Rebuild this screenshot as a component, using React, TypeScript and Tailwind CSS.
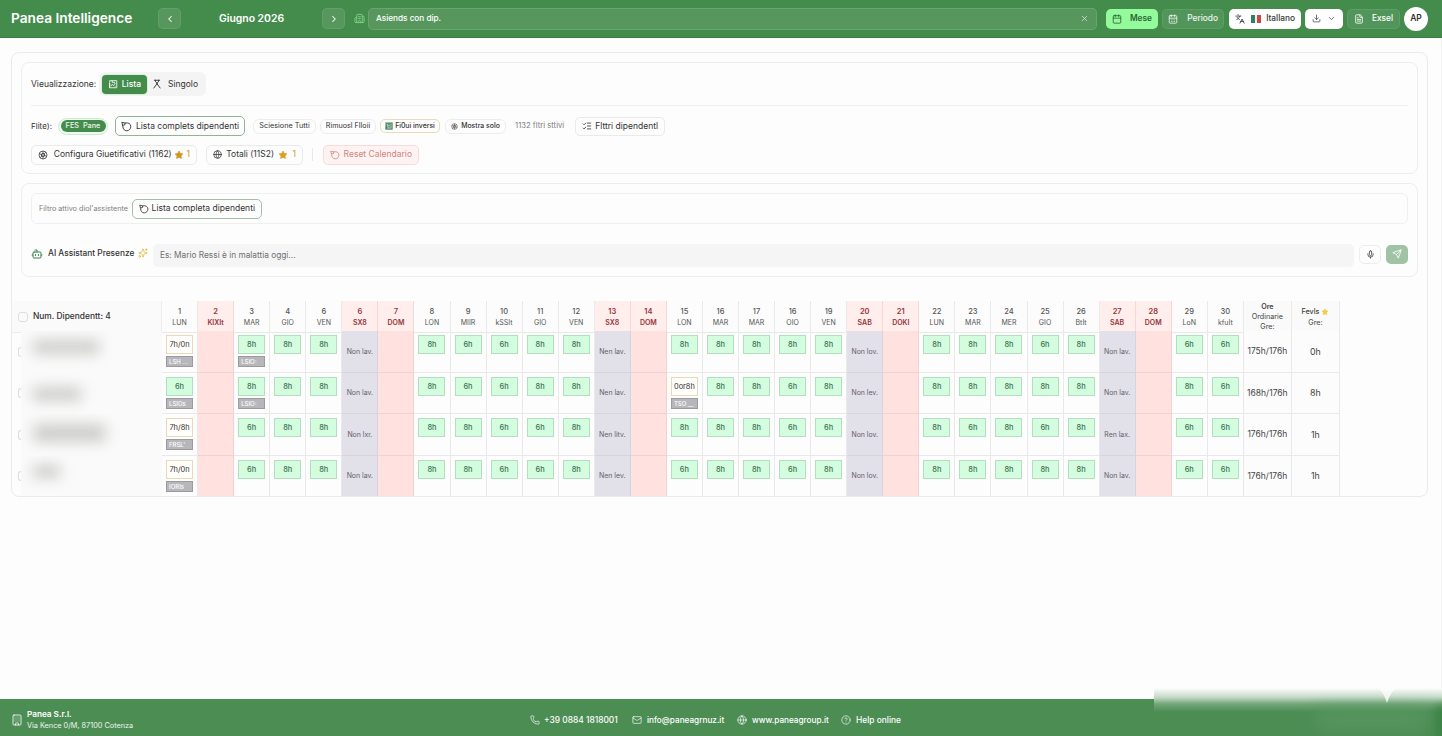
import {
  Bot,
  Building,
  Building2,
  Calendar,
  CalendarDays,
  ChevronDown,
  ChevronLeft,
  ChevronRight,
  CircleHelp,
  Download,
  FileText,
  Globe,
  Languages,
  ListChecks,
  Mail,
  Mic,
  Phone,
  Send,
  Sparkles,
  X,
} from "lucide-react";

interface Giorno {
  num: string;
  nome: string;
  tipo?: "sab" | "dom";
}

interface Riga {
  ore: string[];
  note: Record<number, string>;
  totale: string;
  ferie: string;
  nonLav: string[];
  sfocato: string;
}

const giorni: Giorno[] = [
  { num: "1", nome: "LUN" },
  { num: "2", nome: "KIXIt", tipo: "dom" },
  { num: "3", nome: "MAR" },
  { num: "4", nome: "GIO" },
  { num: "6", nome: "VEN" },
  { num: "6", nome: "SX8", tipo: "sab" },
  { num: "7", nome: "DOM", tipo: "dom" },
  { num: "8", nome: "LON" },
  { num: "9", nome: "MIIR" },
  { num: "10", nome: "kSSIt" },
  { num: "11", nome: "GIO" },
  { num: "12", nome: "VEN" },
  { num: "13", nome: "SX8", tipo: "sab" },
  { num: "14", nome: "DOM", tipo: "dom" },
  { num: "15", nome: "LON" },
  { num: "16", nome: "MAR" },
  { num: "17", nome: "MAR" },
  { num: "16", nome: "OIO" },
  { num: "19", nome: "VEN" },
  { num: "20", nome: "SAB", tipo: "sab" },
  { num: "21", nome: "DOKI", tipo: "dom" },
  { num: "22", nome: "LUN" },
  { num: "23", nome: "MAR" },
  { num: "24", nome: "MER" },
  { num: "25", nome: "GIO" },
  { num: "26", nome: "BtIt" },
  { num: "27", nome: "SAB", tipo: "sab" },
  { num: "28", nome: "DOM", tipo: "dom" },
  { num: "29", nome: "LoN" },
  { num: "30", nome: "kfuIt" },
];

const righe: Riga[] = [
  {
    ore: ["7h/0n", "", "8h", "8h", "8h", "", "", "8h", "6h", "6h", "8h", "8h", "", "", "8h", "8h", "8h", "8h", "8h", "", "", "8h", "8h", "8h", "6h", "8h", "", "", "6h", "6h"],
    note: { 0: "LSH ...", 2: "LSIO:" },
    totale: "175h/176h",
    ferie: "0h",
    nonLav: ["Non lav.", "Nen lav.", "Non lov.", "Non lav."],
    sfocato: "w-[68px] h-[14px] mt-[9px] ml-[11px]",
  },
  {
    ore: ["6h", "", "8h", "8h", "8h", "", "", "8h", "6h", "6h", "8h", "8h", "", "", "0or8h", "8h", "8h", "6h", "8h", "", "", "8h", "8h", "8h", "8h", "8h", "", "", "8h", "6h"],
    note: { 0: "LSIOs", 2: "LSIO:", 14: "TSO __" },
    totale: "168h/176h",
    ferie: "8h",
    nonLav: ["Non lav.", "Nen lav.", "Non lev.", "Non lav."],
    sfocato: "w-[50px] h-[14px] mt-[14px] ml-[11px]",
  },
  {
    ore: ["7h/8h", "", "6h", "8h", "8h", "", "", "8h", "8h", "6h", "6h", "8h", "", "", "8h", "8h", "8h", "6h", "6h", "", "", "8h", "6h", "8h", "6h", "8h", "", "", "6h", "6h"],
    note: { 0: "FRSL'" },
    totale: "176h/176h",
    ferie: "1h",
    nonLav: ["Non lxr.", "Nen litv.", "Non lov.", "Ren lax."],
    sfocato: "w-[73px] h-[18px] mt-[10px] ml-[12px]",
  },
  {
    ore: ["7h/0n", "", "6h", "8h", "8h", "", "", "8h", "8h", "6h", "6h", "8h", "", "", "6h", "8h", "8h", "6h", "8h", "", "", "8h", "8h", "8h", "8h", "8h", "", "", "6h", "6h"],
    note: { 0: "IORIs" },
    totale: "176h/176h",
    ferie: "1h",
    nonLav: ["Non lav.", "Nen lev.", "Non lov.", "Non lav."],
    sfocato: "w-[29px] h-[13px] mt-[9px] ml-[11px]",
  },
];

const sabati = [5, 12, 19, 26];

function IconaLista({ className }: { className?: string }) {
  return (
    <svg viewBox="0 0 12 12" className={className} fill="none" stroke="currentColor" strokeWidth="1">
      <path d="M2 4V2h8.500v8.500H2z" strokeLinejoin="round" />
      <path d="M2 10.500V5M3.500 8.500l1.500-2 1.800 1.300 2-3M5 2v2h3.500M8 8.800h1" />
    </svg>
  );
}

function IconaSingolo({ className }: { className?: string }) {
  return (
    <svg viewBox="0 0 12 12" className={className} fill="none" stroke="currentColor" strokeWidth="1.100" strokeLinecap="round" strokeLinejoin="round">
      <path d="M2.800 1.500h6.400M4 1.500c0 2 .8 3 2 3s2-1 2-3M6 4.500v1.200M6 5.700L2.200 10.800M6 5.700l3.800 5.100" />
    </svg>
  );
}

function IconaTag({ className }: { className?: string }) {
  return (
    <svg viewBox="0 0 12 12" className={className} fill="none" stroke="currentColor" strokeWidth="1" strokeLinejoin="round" strokeLinecap="round">
      <path d="M1.300 1.500l3.200.8c3.200-.9 6.200.7 6.200 3.700 0 2.500-2 4.700-4.400 4.700-2.600 0-4.400-2.100-4.300-4.700z" />
      <path d="M4.500 2.300L4.200 4.200 2 4.700" />
    </svg>
  );
}

function IconaApertura({ className }: { className?: string }) {
  return (
    <svg viewBox="0 0 12 12" className={className} fill="none" stroke="currentColor" strokeWidth=".9">
      <circle cx="6" cy="6" r="4.800" />
      <circle cx="6" cy="6" r="2" fill="currentColor" fillOpacity=".45" />
      <path d="M6 1.200v3M6 8v2.800M1.500 4.500l3 1M7.500 6.500l3 1M2.500 9.200l2.200-2M7.500 4.500l2-2" />
    </svg>
  );
}

function Stella({ className }: { className?: string }) {
  return (
    <svg viewBox="0 0 12 12" className={className} fill="currentColor" stroke="currentColor" strokeLinejoin="round">
      <path d="M6 1.300l1.400 2.900 3.200.5-2.300 2.200.5 3.200L6 8.600l-2.800 1.500.5-3.200L1.400 4.700l3.200-.5z" />
    </svg>
  );
}

function Bandiera() {
  return (
    <span className="flex h-[8px] w-[10px]">
      <span className="w-[4px] bg-[#2f8060]" />
      <span className="w-[2px] bg-[#eee]" />
      <span className="w-[4px] bg-[#c94840]" />
    </span>
  );
}

function Header() {
  return (
    <header className="flex h-[38px] items-center border-b border-[#3d7a45] bg-[#448c4c] pl-[11px] pr-[13px] text-white">
      <h1 className="w-[147px] text-[13.700px] font-semibold whitespace-nowrap">Panea Intelligence</h1>
      <button className="flex h-[21px] w-[23px] items-center justify-center rounded-[5px] border border-white/8 bg-white/10">
        <ChevronLeft size={10} strokeWidth={2.5} />
      </button>
      <div className="w-[141px] pt-px text-center text-[10.400px] font-semibold">Giugno 2026</div>
      <button className="flex h-[21px] w-[23px] items-center justify-center rounded-[5px] border border-white/8 bg-white/10">
        <ChevronRight size={10} strokeWidth={2.5} />
      </button>
      <Building2 size={11} className="mx-[9px] mr-[3px] shrink-0 text-[#7fd085]" />
      <div className="flex h-[22px] w-[729px] shrink-0 items-center justify-between rounded-[5px] border border-white/12 bg-white/10 px-[7px] text-[8.200px] font-medium">
        <span>Asiends con dip.</span>
        <X size={9} className="text-white/75" />
      </div>
      <div className="ml-[9px] flex shrink-0 items-center text-[8.300px] font-medium whitespace-nowrap">
        <button className="flex h-[20px] w-[52px] items-center justify-between rounded-[5px] bg-[#93fb9b] px-[6px] text-[#2b6433]">
          <Calendar size={10} />
          <span className="font-semibold">Mese</span>
        </button>
        <button className="ml-[4px] flex h-[20px] w-[62px] items-center justify-between rounded-[5px] border border-white/8 bg-white/8 px-[5px] text-white/90">
          <CalendarDays size={10} />
          <span>Periodo</span>
        </button>
        <button className="ml-[5px] flex h-[20px] w-[72px] items-center justify-between rounded-[5px] bg-white px-[6px] text-[#333735]">
          <Languages size={10} />
          <Bandiera />
          <span>Itallano</span>
        </button>
        <button className="ml-[4px] flex h-[20px] w-[38px] items-center justify-between rounded-[5px] bg-white px-[7px] text-[#444]">
          <Download size={9} />
          <ChevronDown size={9} />
        </button>
        <button className="ml-[4px] flex h-[20px] w-[53px] items-center justify-between rounded-[5px] border border-white/8 bg-white/8 px-[6px]">
          <FileText size={10} />
          <span>Exsel</span>
        </button>
        <div className="ml-[4px] flex size-[24px] items-center justify-center rounded-full bg-white text-[8.500px] font-semibold text-[#333]">AP</div>
      </div>
    </header>
  );
}

function Filtri() {
  return (
    <section className="h-[112px] rounded-[8px] border border-[#ededed] px-[9px] text-[8.500px] text-[#333]">
      <div className="flex h-[43px] items-center border-b border-[#eee]">
        <span className="w-[68px] pt-px whitespace-nowrap">Vieualizzazione:</span>
        <div className="flex h-[24px] w-[107px] items-center rounded-[6px] bg-[#f4f4f4] p-[2px] pl-[3px] font-medium">
          <button className="flex h-[19px] w-[45px] items-center justify-between rounded-[4px] bg-[#448c4c] px-[6px] text-white ring-1 ring-[#d6efd9]">
            <IconaLista className="size-[10px] shrink-0" />
            <span>Lista</span>
          </button>
          <button className="flex flex-1 items-center justify-between pl-[5px] pr-[6px] font-normal">
            <IconaSingolo className="size-[10px] shrink-0" />
            <span>Singolo</span>
          </button>
        </div>
      </div>
      <div className="mt-[10px] flex h-[20px] items-center whitespace-nowrap">
        <span className="w-[27px] text-[8px]">Flite):</span>
        <span className="flex h-[17px] w-[50px] items-center rounded-full border border-[#cfe8d2] bg-[#effaf0] p-[1.500px]">
          <span className="flex h-full w-full items-center justify-center rounded-full bg-[#448c4c] text-[7.300px] font-medium text-white/90">FES&nbsp; Pane</span>
        </span>
        <button className="ml-[7px] flex h-[20px] w-[130px] items-center justify-between rounded-[5px] border border-[#8fb596] px-[5px]">
          <IconaTag className="size-[11px] shrink-0" />
          <span>Lista complets dipendenti</span>
        </button>
        <button className="ml-[8px] flex h-[15px] w-[63px] items-center justify-center rounded-[6px] border border-[#ededed] text-[7.300px]">Sciesione Tutti</button>
        <button className="ml-[4px] flex h-[15px] w-[56px] items-center justify-center rounded-[6px] border border-[#ededed] text-[7.200px]">Rimuosl Flloii</button>
        <button className="ml-[4px] flex h-[14px] w-[60px] items-center justify-center gap-[2px] rounded-[5px] border border-[#e8dcba] text-[6.900px] font-medium">
          <IconaLista className="size-[8px] shrink-0 bg-[#a9cdb5] text-[#34694a]" />
          Fi0ui inversi
        </button>
        <button className="ml-[5px] flex h-[15px] w-[61px] items-center justify-center gap-[3px] rounded-[6px] border border-[#ededed] text-[6.900px] font-medium">
          <IconaApertura className="size-[7px] shrink-0" />
          Mostra solo
        </button>
        <span className="ml-[9px] w-[60px] text-[7.700px] text-[#808080]">1132 fltri sttivi</span>
        <button className="flex h-[19px] w-[90px] items-center justify-between rounded-[5px] border border-[#eaeaea] px-[6px]">
          <ListChecks size={10} />
          <span>Flttri dipendentl</span>
        </button>
      </div>
      <div className="mt-[8px] flex h-[21px] items-center whitespace-nowrap">
        <button className="flex h-[20px] w-[166px] items-center rounded-[5px] border border-[#eaeaea] px-[6px]">
          <IconaApertura className="size-[10px] shrink-0" />
          <span className="ml-[4px] w-[123px]">Configura Giuetificativi (1162)</span>
          <Stella className="size-[10px] shrink-0 text-[#d4971d]" />
          <span className="ml-[3px] text-[#cb9634]">1</span>
        </button>
        <button className="ml-[9px] flex h-[20px] w-[97px] items-center justify-between rounded-[5px] border border-[#eaeaea] px-[6px]">
          <Globe size={9} />
          <span>Totali (11S2)</span>
          <Stella className="size-[10px] shrink-0 text-[#d9a027]" />
          <span className="text-[#cb9634]">1</span>
        </button>
        <span className="ml-[9px] h-[13px] w-px bg-[#e9e9e9]" />
        <button className="ml-[10px] flex h-[20px] w-[96px] items-center justify-between rounded-[5px] border border-[#f8dcd9] bg-[#fef3f2] px-[6px] text-[#cf8580]">
          <IconaTag className="size-[10px] shrink-0" />
          <span>Reset Calendario</span>
        </button>
      </div>
    </section>
  );
}

function Assistente() {
  return (
    <section className="mt-[9px] h-[94px] rounded-[8px] border border-[#ededed] px-[9px] pt-[9px] text-[8.500px] text-[#333]">
      <div className="flex h-[31px] items-center rounded-[6px] border border-[#efefef] pl-[7px]">
        <span className="w-[93px] pt-px text-[7.250px] whitespace-nowrap text-[#808080]">Filtro attivo diol'assistente</span>
        <button className="flex h-[20px] w-[130px] items-center justify-between rounded-[5px] border border-[#a3bfa8] px-[6px] whitespace-nowrap">
          <IconaTag className="size-[10px] shrink-0" />
          <span>Lista completa dipendenti</span>
        </button>
      </div>
      <div className="mt-[19px] flex h-[24px] items-center">
        <Bot size={12} className="-mt-[2px] shrink-0 text-[#39844a]" />
        <span className="-mt-[4px] ml-[5px] w-[90px] text-[8.300px] font-medium whitespace-nowrap">AI Assistant Presenze</span>
        <Sparkles size={10} className="-mt-[4px] shrink-0 text-[#dfbe4e]" />
        <div className="ml-[5px] flex h-[23px] flex-1 items-center rounded-[5px] bg-[#f5f5f5] pl-[7px] text-[8.300px] text-[#707070]">Es: Mario Ressi è in malattia oggi...</div>
        <button className="-mt-[2px] ml-[5px] flex h-[19px] w-[22px] items-center justify-center rounded-[5px] border border-[#ececec]">
          <Mic size={9} />
        </button>
        <button className="-mt-[2px] ml-[5px] flex h-[19px] w-[22px] items-center justify-center rounded-[5px] bg-[#9fc3a4] text-white">
          <Send size={10} />
        </button>
      </div>
    </section>
  );
}

const colonne = "grid grid-cols-[150px_repeat(30,36.07px)_48px_48px]";

function CellaOre({ ore, nota, indice, riga }: { ore: string; nota?: string; indice: number; riga: Riga }) {
  const tipo = giorni[indice].tipo;

  if (tipo === "sab") {
    return (
      <div className="flex items-center justify-center border-r border-b border-[#d6d4dc] bg-[#e2e0e8] pt-px text-[6.900px] whitespace-nowrap text-[#62606a]">
        {riga.nonLav[sabati.indexOf(indice)]}
      </div>
    );
  }
  if (tipo === "dom") {
    return <div className="border-r border-b border-[#f1d2d0] bg-[#ffe1df]" />;
  }

  const parziale = ore.length > 2;
  return (
    <div className="flex flex-col items-center border-r border-b border-[#e9e9e9] pt-[4px]">
      <span
        className={
          parziale
            ? "flex h-[19px] w-[27px] items-center justify-center border border-[#ead9b8] bg-[#fffefb] pt-px text-[7.400px] text-[#333]"
            : "flex h-[19px] w-[27px] items-center justify-center border border-[#b3dfc0] bg-[#d4fde0] pt-px text-[7.400px] font-medium text-[#3d7350]"
        }
      >
        {ore}
      </span>
      {nota && (
        <span className="mt-[2px] flex h-[11px] w-[27px] items-center border border-[#9b9b9f] bg-[#b7b7bb] pl-[2px] text-[6px] font-medium whitespace-nowrap text-white">
          {nota}
        </span>
      )}
    </div>
  );
}

function Tabella() {
  return (
    <div className="mt-[24px] w-[1328px] text-[#444]">
      <div className={`${colonne} h-[30px]`}>
        <div className="flex items-center border-r border-b border-[#ececec] bg-[#fafafa] pl-[6px] text-[8.400px] font-medium text-[#303030]">
          <span className="mr-[5px] size-[10px] rounded-[3px] border border-[#dedede]" />
          Num. Dipendentt: 4
        </div>
        {giorni.map((g, i) => (
          <div
            key={i}
            className={
              g.tipo
                ? "flex flex-col items-center justify-center border-r border-b border-[#f5d8d6] bg-[#ffeeec] pt-[2px] text-[7.500px] leading-[10.500px] font-semibold text-[#98353a]"
                : "flex flex-col items-center justify-center border-r border-b border-[#e9e9e9] bg-[#fcfcfc] pt-[2px] text-[7.500px] leading-[10.500px] text-[#555]"
            }
          >
            <span className={g.tipo ? "" : "font-medium"}>{g.num}</span>
            <span className="text-[7px]">{g.nome}</span>
          </div>
        ))}
        <div className="flex flex-col items-center justify-center border-r border-b border-[#e9e9e9] bg-[#fafafa] pt-px text-[7.200px] leading-[10px]">
          <span className="font-semibold">Ore</span>
          <span>Ordinarie</span>
          <span>Gre:</span>
        </div>
        <div className="flex flex-col items-center justify-center border-r border-b border-[#e9e9e9] bg-[#fafafa] pt-[2px] text-[7.200px] leading-[10.500px]">
          <span className="flex items-center gap-[2px] font-medium">
            Fevls <Stella className="size-[8px] text-[#f5c94c]" />
          </span>
          <span>Gre:</span>
        </div>
      </div>
      {righe.map((r, i) => (
        <div key={i} className={`${colonne} h-[41.500px]`}>
          <div className="flex items-center overflow-hidden pl-[6px]">
            <span className="h-[10px] w-[3px] shrink-0 rounded-l-[3px] border border-r-0 border-[#dedede]" />
            <div className="h-full flex-1 bg-[#fafafa]">
              <div className={`${r.sfocato} rounded-[5px] bg-[#cdcdcb] blur-[7px]`} />
            </div>
          </div>
          {r.ore.map((o, j) => (
            <CellaOre key={j} ore={o} nota={r.note[j]} indice={j} riga={r} />
          ))}
          <div className="flex items-center justify-center border-r border-b border-[#e9e9e9] bg-[#fcfcfc] pt-px text-[8.500px]">{r.totale}</div>
          <div className="flex items-center justify-center border-r border-b border-[#e9e9e9] bg-[#fcfcfc] text-[8.800px]">{r.ferie}</div>
        </div>
      ))}
    </div>
  );
}

function Footer() {
  return (
    <footer className="relative flex h-[37px] items-center bg-[#4c8d54] pt-[5px] text-[8.200px] font-medium whitespace-nowrap text-white">
      <div className="flex w-[530px] items-center pl-[11px]">
        <Building size={12} className="text-white/80" />
        <div className="ml-[4px] leading-[11px]">
          <div className="text-[8.200px] font-semibold">Panea S.r.l.</div>
          <div className="text-[7.300px] font-normal text-white/90">Via Kence 0/M, 87100 Cotenza</div>
        </div>
      </div>
      <div className="flex w-[102px] items-center gap-[4px]">
        <Phone size={10} className="text-white/80" />
        <span className="text-[8.400px]">+39 0884 1818001</span>
      </div>
      <div className="flex w-[105px] items-center gap-[5px]">
        <Mail size={10} className="text-white/80" />
        info@paneagrnuz.it
      </div>
      <div className="flex w-[104px] items-center gap-[5px]">
        <Globe size={10} className="text-white/80" />
        www.paneagroup.it
      </div>
      <div className="flex items-center gap-[5px] text-[8.400px]">
        <CircleHelp size={10} className="text-white/80" />
        Help online
      </div>
      {/* assistant bubble fading over the footer */}
      <div className="absolute -top-[11px] right-0 h-[48px] w-[288px] overflow-hidden bg-[linear-gradient(to_bottom,#fdfdfd_0,#c7dbc9_9px,#73a679_16px,#4c8d54_24px)]">
        <div className="absolute top-[24px] right-[12px] h-[14px] w-[115px] rounded-full bg-[#5d9865] blur-[9px]" />
        <div className="absolute top-[18px] -right-[6px] h-[36px] w-[12px] bg-[#3b8145] blur-[4px]" />
        <svg viewBox="0 0 18 16" className="absolute top-0 right-[46px] h-[16px] w-[18px]">
          <path d="M0 0h18Q12 5 9 15Q6 5 0 0z" fill="#fdfdfd" fillOpacity=".8" />
        </svg>
      </div>
    </footer>
  );
}

export default function App() {
  return (
    <div className="flex h-[736px] w-[1442px] flex-col overflow-hidden bg-[#fdfdfd] font-['Inter','Liberation_Sans',sans-serif]">
      <Header />
      <main className="flex-1 border-r border-[#f0f0f0] pt-[14px] pl-[11px]">
        <div className="h-[445px] w-[1417px] overflow-hidden rounded-[8px] border border-[#ebebeb]">
          <div className="px-[9px] pt-[9px]">
            <Filtri />
            <Assistente />
          </div>
          <Tabella />
        </div>
      </main>
      <Footer />
    </div>
  );
}
